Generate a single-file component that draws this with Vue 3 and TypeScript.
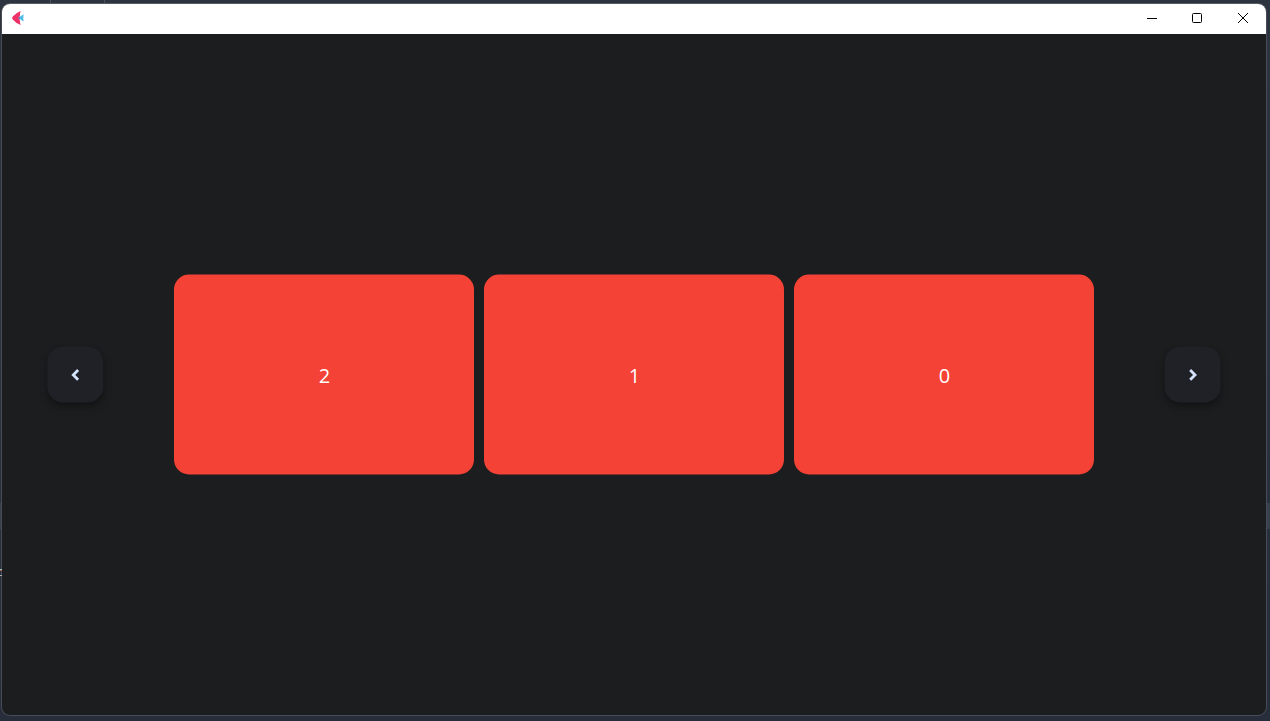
<script setup lang="ts">
import { ref } from 'vue'

const items = ref<number[]>([2, 1, 0])

function previous(): void {
  items.value = [...items.value.slice(1), items.value[0]]
}

function next(): void {
  const last = items.value[items.value.length - 1]
  items.value = [last, ...items.value.slice(0, -1)]
}
</script>

<template>
  <div class="desktop">
    <i class="backdrop-line first"></i>
    <i class="backdrop-line second"></i>
    <i class="backdrop-band left"></i>
    <i class="backdrop-band right"></i>
    <i class="backdrop-mark warm"></i>
    <i class="backdrop-mark pale"></i>
    <main class="window">
      <header class="titlebar">
        <svg class="logo" width="14" height="16" viewBox="0 0 14 16" aria-hidden="true">
          <path d="M11.6 4.2 L6 8 L11.6 11.6 Q11 8 11.6 4.2Z" fill="#55bce8" />
          <path d="M8.6 .9 Q4 2.8 .8 6.4 Q-.5 8 .8 9.4 Q4 13.2 8.6 15.1 Q7.9 12.5 7.9 10.2 L6.4 8 L7.9 5.7 Q7.9 3.4 8.6 .9Z" fill="#ee3167" />
          <path d="M6.2 8 L8 6.3 V9.6Z" fill="#5b70ad" />
        </svg>
        <div class="controls">
          <button aria-label="Minimize">
            <svg width="12" height="12" viewBox="0 0 12 12"><path d="M1 6.5H11" /></svg>
          </button>
          <button aria-label="Maximize">
            <svg width="12" height="12" viewBox="0 0 12 12"><rect x="1.5" y="1.5" width="9" height="9" rx="1" /></svg>
          </button>
          <button aria-label="Close">
            <svg width="12" height="12" viewBox="0 0 12 12"><path d="M1 1L11 11M11 1L1 11" /></svg>
          </button>
        </div>
      </header>
      <section class="content">
        <button class="nav" aria-label="Previous" @click="previous">
          <svg width="24" height="24" viewBox="0 0 24 24"><path d="M14.8 7.6L10 12.4L14.8 17.2" /></svg>
        </button>
        <div class="cards">
          <div v-for="item in items" :key="item" class="card">{{ item }}</div>
        </div>
        <button class="nav" aria-label="Next" @click="next">
          <svg width="24" height="24" viewBox="0 0 24 24"><path d="M9.6 7.6L14.4 12.4L9.6 17.2" /></svg>
        </button>
      </section>
    </main>
  </div>
</template>

<style>
body {
  margin: 0;
  overflow: hidden;
}
</style>

<style scoped>
.desktop {
  position: relative;
  box-sizing: border-box;
  width: 1270px;
  height: 721px;
  padding: 3px 3px 5px 1px;
  background: linear-gradient(#2d3440, #282d3b);
  font-family: "Open Sans", "Noto Sans", sans-serif;
}

.window {
  position: relative;
  box-sizing: border-box;
  display: flex;
  flex-direction: column;
  height: 713px;
  border: 1px solid #484c56;
  border-top-color: #555a63;
  border-radius: 9px;
  background: #1b1d1e;
  overflow: hidden;
}

.titlebar {
  display: flex;
  flex: 0 0 30px;
  align-items: center;
  justify-content: space-between;
  padding-left: 10px;
  background: #fff;
}

.logo {
  display: block;
  margin-top: -2px;
}

.controls {
  display: flex;
  height: 28px;
  margin-bottom: 2px;
}

button {
  display: flex;
  align-items: center;
  justify-content: center;
  margin: 0;
  padding: 0;
  border: 0;
  background: none;
}

svg {
  fill: none;
}

.controls button {
  width: 46px;
}

.controls button:first-child {
  width: 44px;
}

.controls svg {
  stroke: #000;
  stroke-width: 1;
}

.content {
  display: flex;
  flex: 1;
  align-items: center;
  justify-content: space-around;
  padding: 0 10px;
}

.nav {
  width: 56px;
  height: 56px;
  border-radius: 16px;
  background: #202127;
  box-shadow: 0 3px 5px -1px rgba(0, 0, 0, 0.2), 0 5px 9px rgba(0, 0, 0, 0.16);
  transform: translateY(-0.5px);
}

.nav:first-child {
  transform: translate(0.3px, -0.5px);
}

.nav:last-child {
  transform: translate(-0.4px, -0.5px);
}

.nav svg {
  stroke: #d3e3fb;
  stroke-width: 2.8;
}

.cards {
  display: flex;
  gap: 10px;
  transform: translateY(-0.5px);
}

.card {
  box-sizing: border-box;
  display: flex;
  align-items: center;
  justify-content: center;
  width: 300px;
  height: 200px;
  padding: 3px 0 0 1px;
  border-radius: 15px;
  background: #f44336;
  color: #fff;
  font-size: 20px;
  line-height: 28px;
}

.backdrop-line,
.backdrop-band,
.backdrop-mark {
  position: absolute;
}

.backdrop-line {
  top: 0;
  width: 1px;
  height: 3px;
  background: #485160;
}

.first {
  left: 50px;
}

.second {
  left: 104px;
}

.backdrop-band {
  top: 503px;
  height: 26px;
  background: #383f4d;
}

.left {
  left: 0;
  width: 1px;
}

.right {
  right: 0;
  width: 3px;
}

.backdrop-mark {
  z-index: 1;
  left: 0;
  width: 2px;
  height: 1px;
}

.warm {
  top: 569px;
  background: #9cbcc2;
  box-shadow: 0 1px #a5654a;
}

.pale {
  top: 575px;
  background: #a9acb5;
}
</style>
